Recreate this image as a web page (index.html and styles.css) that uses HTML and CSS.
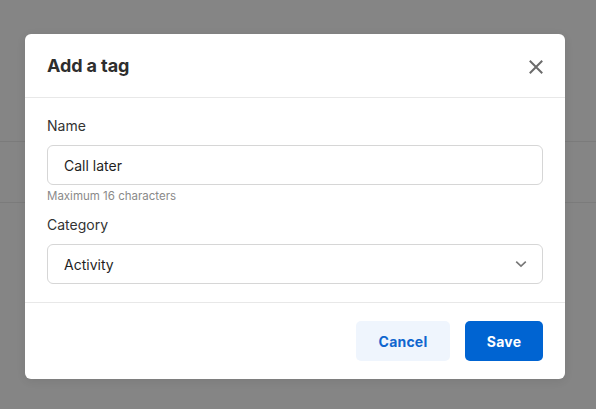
FILE: index.html
```html
<!DOCTYPE html>
<html lang="en">
<head>
<meta charset="utf-8">
<title>Add a tag</title>
<link rel="stylesheet" href="styles.css">
</head>
<body>
<div class="page">
  <div class="bg-row bg-row-a"></div>
  <div class="bg-row bg-row-b"></div>
</div>
<div class="overlay">
  <div class="modal" role="dialog" aria-labelledby="modal-title">
    <div class="modal-header">
      <h2 class="modal-title" id="modal-title">Add a tag</h2>
      <button class="close-btn" aria-label="Close">
        <svg width="14" height="14" viewBox="0 0 14 14"><path d="M1.5 1.5 L12.5 12.5 M12.5 1.5 L1.5 12.5" stroke="#6b6b6b" stroke-width="2" stroke-linecap="square" fill="none"/></svg>
      </button>
    </div>
    <div class="modal-body">
      <label class="field-label" for="name">Name</label>
      <div class="input">Call later</div>
      <div class="helper">Maximum 16 characters</div>
      <label class="field-label label-gap">Category</label>
      <div class="input select">
        <span>Activity</span>
        <svg width="12" height="8" viewBox="0 0 12 8"><path d="M1.2 1.6 L6 6.2 L10.8 1.6" stroke="#777" stroke-width="1.6" fill="none"/></svg>
      </div>
    </div>
    <div class="modal-footer">
      <button class="btn btn-secondary">Cancel</button>
      <button class="btn btn-primary">Save</button>
    </div>
  </div>
</div>
</body>
</html>
```
FILE: styles.css
```css
* { box-sizing: border-box; }
html, body { margin: 0; padding: 0; }
body {
  width: 596px;
  height: 409px;
  overflow: hidden;
  background: #858585;
  font-family: "Inter", "DejaVu Sans", sans-serif;
  position: relative;
}
.page {
  padding-top: 141px;
}
.bg-row {
  height: 61px;
  border-top: 1px solid #7b7b7b;
}
.bg-row-b { height: 1px; }
.overlay {
  position: absolute;
  inset: 0;
  padding: 34px 0 0 25px;
}
.modal {
  width: 540px;
  background: #fff;
  border-radius: 6px;
  box-shadow: 0 2px 10px rgba(0,0,0,0.08);
}
.modal-header {
  height: 64px;
  display: flex;
  align-items: center;
  justify-content: space-between;
  padding: 0 22px;
  border-bottom: 1px solid #e8e8e8;
}
.modal-title {
  margin: 0;
  font-size: 18px;
  font-weight: 700;
  color: #2e2e2e;
  letter-spacing: -0.1px;
}
.close-btn {
  border: 0;
  background: none;
  padding: 0;
  width: 14px;
  height: 14px;
  display: flex;
  margin-top: 2px;
}
.modal-body {
  padding: 18px 22px 18px;
  border-bottom: 1px solid #e8e8e8;
  display: flex;
  flex-direction: column;
}
.field-label {
  font-size: 14px;
  line-height: 20px;
  color: #333;
  margin-bottom: 9px;
}
.label-gap { margin-top: 11px; }
.input {
  height: 40px;
  border: 1px solid #d6d6d6;
  border-radius: 6px;
  padding: 0 16px;
  display: flex;
  align-items: center;
  font-size: 14px;
  color: #1f1f1f;
}
.select {
  justify-content: space-between;
  padding-right: 15px;
}
.helper {
  margin-top: 3px;
  font-size: 11.5px;
  line-height: 16px;
  color: #8a8a8a;
}
.modal-footer {
  display: flex;
  justify-content: flex-end;
  gap: 15px;
  padding: 18px 22px 18px;
}
.btn {
  height: 40px;
  border: 0;
  border-radius: 5px;
  font-family: "Inter", sans-serif;
  font-size: 14px;
  font-weight: 700;
  letter-spacing: 0.2px;
}
.btn-secondary {
  width: 94px;
  background: #eff5fd;
  color: #0f66cf;
}
.btn-primary {
  width: 78px;
  background: #0064d2;
  color: #fff;
}
```
